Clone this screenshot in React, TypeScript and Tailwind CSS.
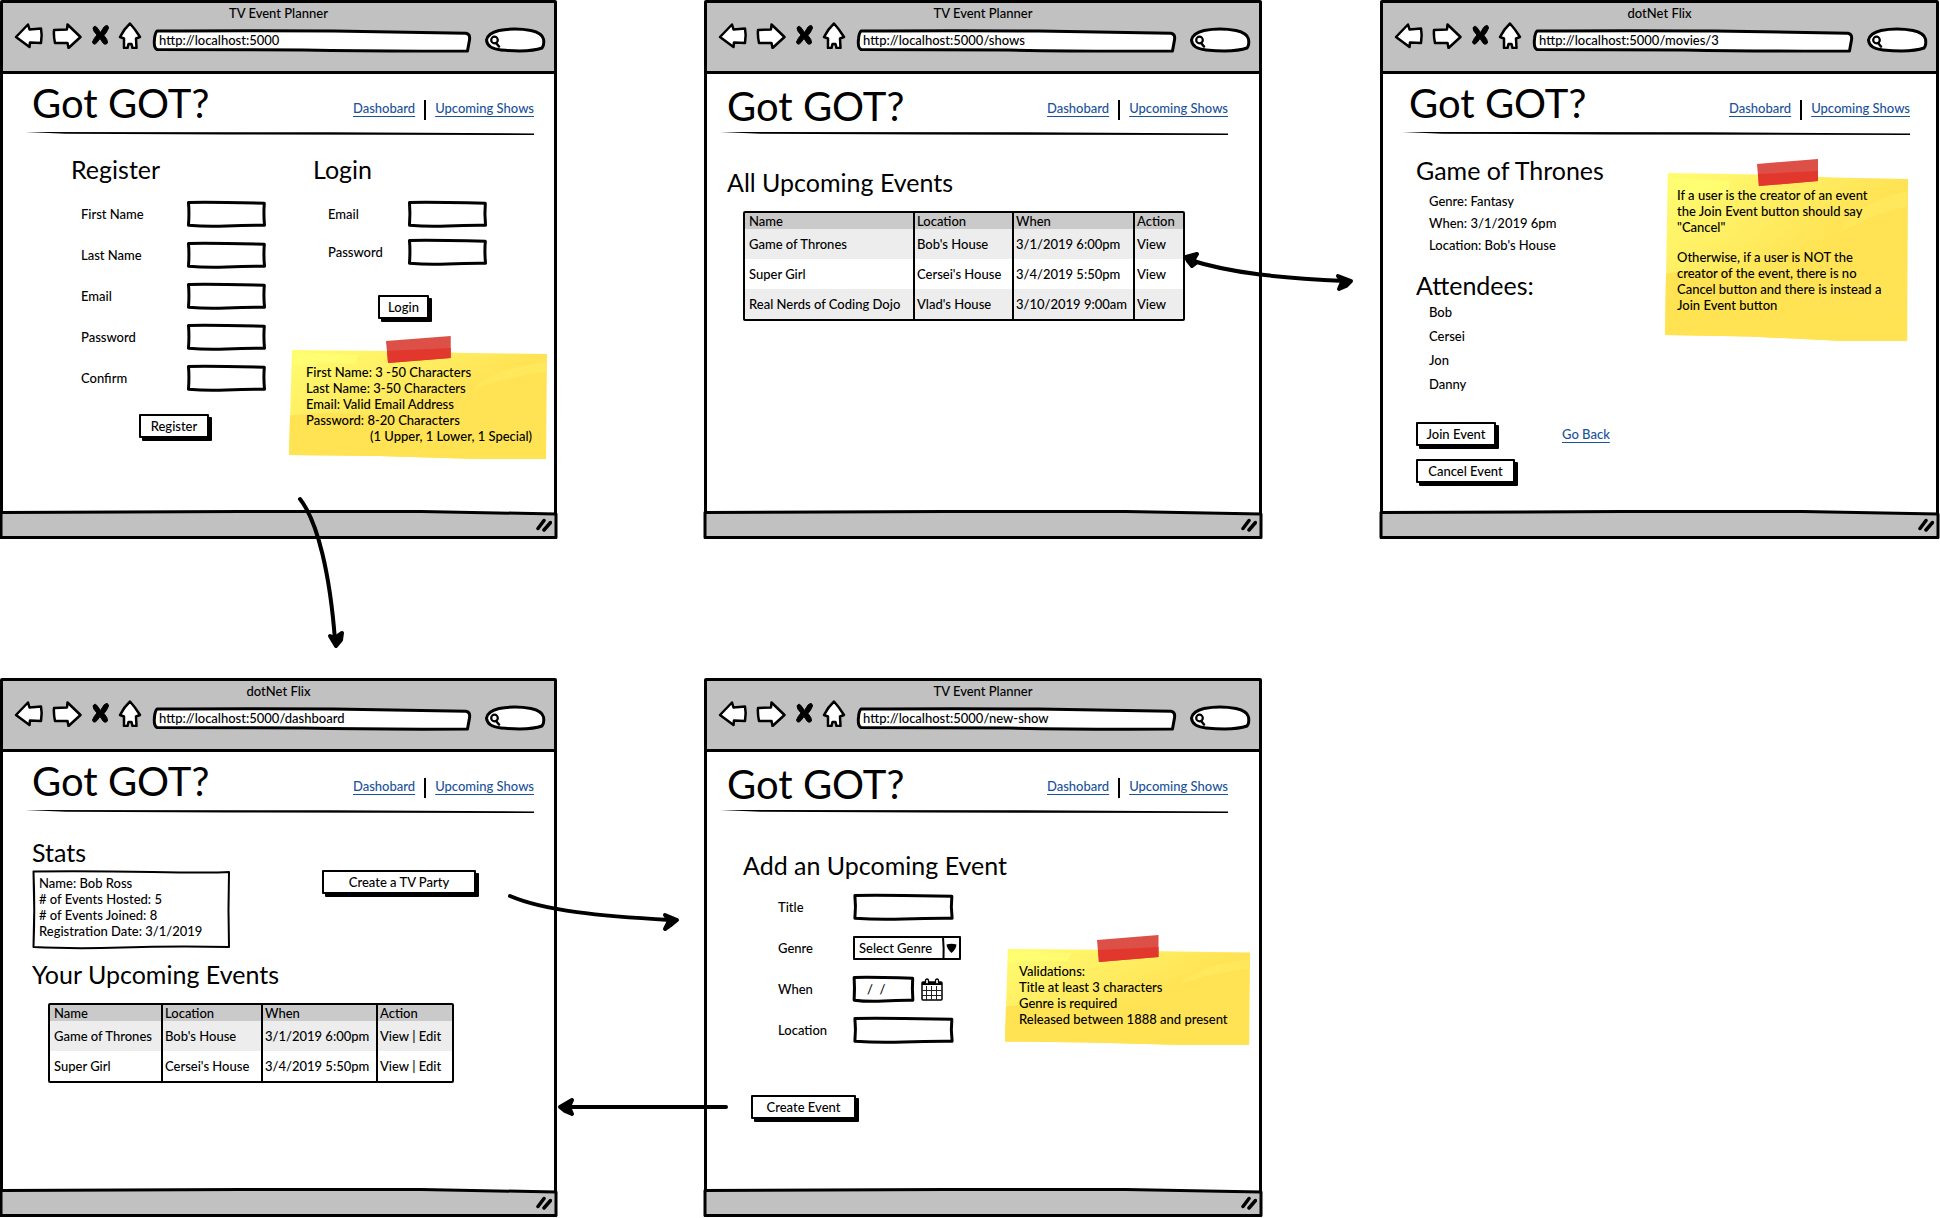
import React from "react";

/* ---------- hand-drawn primitives ---------- */

function Frame({ d, box, fill = "#fff", width = 2 }: { d: string; box: string; fill?: string; width?: number }) {
  return (
    <svg
      aria-hidden="true"
      viewBox={box}
      preserveAspectRatio="none"
      className="pointer-events-none absolute inset-0 h-full w-full overflow-visible"
    >
      <path d={d} fill={fill} stroke="#000" strokeWidth={width} strokeLinejoin="round" vectorEffect="non-scaling-stroke" />
    </svg>
  );
}

function BoxFrame() {
  return (
    <Frame
      box="0 0 80 26"
      width={3}
      d="M1.5 1.5 Q20 1.2 40 1.6 T78.3 2.2 Q77.4 13 78.5 24.2 Q60 24 40 25 T1.5 24.2 Q2.4 12 1.5 1.5Z"
    />
  );
}

function PanelFrame() {
  return (
    <Frame
      box="0 0 198 78"
      width={2}
      d="M1.5 1.5 Q60 1 120 2 T197 2 Q196 40 197 77 Q140 76 90 77.500 T1.500 77 Q3 40 1.500 1.500Z"
    />
  );
}

function Field({ id, label, type = "text" }: { id: string; label: string; type?: string }) {
  return (
    <>
      <label htmlFor={id}>{label}</label>
      <div className="relative h-[26px]">
        <BoxFrame />
        <input id={id} type={type} className="relative h-full w-full bg-transparent px-2 outline-none" />
      </div>
    </>
  );
}

function SketchButton({ children, className = "" }: { children: React.ReactNode; className?: string }) {
  return (
    <button
      type="button"
      className={`h-6 rounded-[1px] border-2 border-black bg-white px-2 leading-4 shadow-[3px_3px_0_#000] ${className}`}
    >
      {children}
    </button>
  );
}

function Link({ children }: { children: React.ReactNode }) {
  return (
    <a href="#" className="text-[#1b5299] underline decoration-1 underline-offset-[3px]">
      {children}
    </a>
  );
}

function Heading({ children, className = "" }: { children: React.ReactNode; className?: string }) {
  return <h2 className={`text-[25px] leading-[30px] font-normal whitespace-nowrap ${className}`}>{children}</h2>;
}

function StickyNote({ children, className = "" }: { children: React.ReactNode; className?: string }) {
  const id = React.useId();
  return (
    <aside className={`relative whitespace-nowrap ${className}`}>
      <svg
        aria-hidden="true"
        viewBox="0 0 260 110"
        preserveAspectRatio="none"
        className="pointer-events-none absolute inset-0 h-full w-full"
      >
        <defs>
          <linearGradient id={id} x1="0" y1="0" x2="0.6" y2="0.5">
            <stop offset="0" stopColor="#fffd70" />
            <stop offset="0.45" stopColor="#fff166" />
            <stop offset="1" stopColor="#ffe354" />
          </linearGradient>
        </defs>
        <path d="M3 0 L100 1 L180 3 L259 4 L258 110 L190 110 L90 107 L0 106 Z" fill={`url(#${id})`} />
        <path d="M1 66 Q60 60 105 70 Q150 100 258 92 L258 110 L190 110 L90 107 L0 106 Z" fill="#ffe352" />
        <path d="M5 3 L70 5 L66 14 Q40 12 4 16Z" fill="#ffff74" opacity="0.7" />
        <path d="M185 40 Q200 20 258 12 L258 22 Q215 28 185 40Z" fill="#ffee62" opacity="0.5" />
      </svg>
      <svg
        aria-hidden="true"
        viewBox="0 0 64 27"
        preserveAspectRatio="none"
        className="pointer-events-none absolute -top-3.5 left-[37.5%] h-[27px] w-1/4"
      >
        <path d="M0 5 L64 0 L64 22 L2 27 Z" fill="#dc5048" />
        <path d="M1 15 L64 12 L64 22 L2 27 Z" fill="#e2372c" />
      </svg>
      <div className="relative">{children}</div>
    </aside>
  );
}

/* ---------- browser chrome ---------- */

function ToolIcon({ d, className, label }: { d: string; className: string; label: string }) {
  return (
    <button type="button" aria-label={label} className={`shrink-0 ${className}`}>
      <svg viewBox={`0 0 ${label === "Home" ? 24 : 30} 28`} className="h-7 w-full">
        <path d={d} fill="#fff" stroke="#000" strokeWidth="2.5" strokeLinejoin="round" />
      </svg>
    </button>
  );
}

type BrowserProps = {
  id: string;
  title: string;
  url: string;
  className: string;
  navClass: string;
  titleClass?: string;
  children: React.ReactNode;
};

function Browser({ id, title, url, className, navClass, titleClass = "pt-px", children }: BrowserProps) {
  return (
    <section className={`flex flex-col rounded-[2px] border-[3px] border-black bg-white ${className}`}>
      <header className="border-b-[3px] border-black bg-[#c1c1c1] pt-0.5 pb-[19px]">
        <div className="text-center">{title}</div>
        <div className="flex items-start gap-2 pr-[9px] pl-[11px]">
          <ToolIcon
            label="Back"
            className="w-[30px]"
            d="M2 16 L14 3.5 L15.5 8.5 L27 7.5 Q28.4 14 27 22 L16 21.5 L15.5 26 Z"
          />
          <ToolIcon
            label="Forward"
            className="w-[30px]"
            d="M2 9 L15 8.5 L15.5 3.5 L28.5 16 L16.5 27 L15.5 22 L3 22 Q1.5 15 2 9Z"
          />
          <button type="button" aria-label="Stop" className="w-5 shrink-0">
            <svg viewBox="0 0 20 28" className="h-7 w-full">
              <path
                d="M3 7 Q5 3 8 8 L10.5 11.5 L14 6 Q18 2.500 18.500 7 Q17 11 14 14.500 Q18 19 17.500 22 Q14.500 25 12 20.500 L10 17.500 L7 21.500 Q3.500 25 2.500 21 Q4 17 7 14 Q3 10 3 7Z"
                fill="#000"
                stroke="#000"
                strokeWidth="1"
              />
            </svg>
          </button>
          <ToolIcon
            label="Home"
            className="w-6"
            d="M12 2.500 Q17 8 22 16 L18 17.500 L18.500 27 L14.500 27 L13.500 23 L10.500 23 L9.500 27 L6 27 L6 17.500 L2 16 Q6 8 12 2.500Z"
          />
          <div className="relative mt-[9px] ml-[3px] h-[22px] min-w-0 flex-1">
            <Frame
              box="0 0 317 22"
              width={3}
              d="M4 1 Q100 0.5 180 1 L312 3.2 Q316.500 4 315.500 10 L313.500 21 Q220 21.500 150 20 L4 19.500 Q0.500 18 1.500 9 Q2 3 4 1Z"
            />
            <input
              aria-label="Address"
              defaultValue={url}
              className="relative h-5 w-full bg-transparent px-1.5 leading-5 outline-none"
            />
          </div>
          <div className="relative mt-[7px] ml-1.5 h-6 w-[60px] shrink-0">
            <Frame
              box="0 0 60 24"
              width={3}
              d="M14 2.500 Q30 -0.500 46 2.500 Q57 5 58.500 11 Q59.500 17 57 20 Q45 24.500 16 22 Q2 20.500 1.500 12 Q3 5 14 2.500Z"
            />
            <svg aria-hidden="true" viewBox="0 0 12 13" className="absolute top-[7px] left-1 h-[13px] w-3">
              <circle cx="5.500" cy="5" r="3.300" fill="none" stroke="#000" strokeWidth="2.200" />
              <path d="M7 8 L10 11.500" stroke="#000" strokeWidth="2.500" strokeLinecap="round" />
            </svg>
            <input aria-label="Search" className="relative h-full w-full bg-transparent pr-2 pl-4 outline-none" />
          </div>
        </div>
      </header>

      <main className="flex-1">
        <div className={navClass}>
          <div className="flex min-h-[58px] items-start justify-between pt-2 pl-[7px]">
            <h1 className={`text-[40px] leading-[40px] font-normal whitespace-nowrap ${titleClass}`}>Got GOT?</h1>
            <nav aria-label={`${id} navigation`} className="flex gap-[9px] pt-[18px]">
              <Link>Dashobard</Link>
              <span className="h-5 w-0.5 bg-black" />
              <Link>Upcoming Shows</Link>
            </nav>
          </div>
          <hr className="h-[3px] border-0 bg-black [clip-path:polygon(0_0,60%_10%,100%_50%,100%_100%,40%_85%,8%_55%)]" />
        </div>
        {children}
      </main>

      <footer className="relative -mx-[2px] -mb-[2px] h-7">
        <Frame box="0 0 555 28" width={3} fill="#c1c1c1" d="M0 2.500 Q150 1.500 240 1.500 T420 1.500 L555 4 L555 27.500 L0 27.500Z" />
        <svg aria-hidden="true" viewBox="0 0 16 14" className="absolute right-1 bottom-1.5 h-3.5 w-4">
          <path d="M2 10.500 L8 2.500 M8 12 L14.500 4.500" stroke="#000" strokeWidth="3.500" strokeLinecap="round" />
        </svg>
      </footer>
    </section>
  );
}

/* ---------- event table ---------- */

const HEADS = ["Name", "Location", "When", "Action"];

function EventTable({
  rows,
  widths,
  actions,
  className,
}: {
  rows: string[][];
  widths: string[];
  actions: string[];
  className: string;
}) {
  const pad = (i: number) => (i === 0 ? "pl-1" : "border-l-2 border-black pl-0.5");
  return (
    <table className={`border-separate border-spacing-0 rounded-[2px] border-2 border-black text-left whitespace-nowrap ${className}`}>
      <thead className="bg-[#cacaca]">
        <tr>
          {HEADS.map((h, i) => (
            <th key={h} scope="col" className={`font-medium ${widths[i]} ${pad(i)}`}>
              {h}
            </th>
          ))}
        </tr>
      </thead>
      <tbody>
        {rows.map((r) => (
          <tr key={r[0]} className="odd:bg-[#ededed]">
            {r.map((c, i) => (
              <td key={c} className={`py-[7px] ${pad(i)}`}>
                {c}
              </td>
            ))}
            <td className={`py-[7px] ${pad(3)}`}>
              {actions.map((a, i) => (
                <React.Fragment key={a}>
                  {i > 0 && " | "}
                  <a href="#">{a}</a>
                </React.Fragment>
              ))}
            </td>
          </tr>
        ))}
      </tbody>
    </table>
  );
}

const THRONES = ["Game of Thrones", "Bob's House", "3/1/2019 6:00pm"];
const SUPERGIRL = ["Super Girl", "Cersei's House", "3/4/2019 5:50pm"];
const NERDS = ["Real Nerds of Coding Dojo", "Vlad's House", "3/10/2019 9:00am"];

/* ---------- screens ---------- */

function AuthScreen() {
  return (
    <Browser
      id="Welcome"
      title="TV Event Planner"
      url="http://localhost:5000"
      className="col-start-1"
      navClass="ml-[22px] mr-5"
    >
      <div className="grid grid-cols-[218px_1fr] pt-[19px] pb-[51px] pl-[68px]">
        <form>
          <Heading>Register</Heading>
          <div className="mt-[17px] grid grid-cols-[106px_79px] items-center gap-y-[15px] pl-2.5">
            <Field id="first" label="First Name" />
            <Field id="last" label="Last Name" />
            <Field id="reg-email" label="Email" />
            <Field id="reg-pass" label="Password" type="password" />
            <Field id="confirm" label="Confirm" type="password" />
          </div>
          <SketchButton className="mt-[23px] ml-[68px] w-[70px]">Register</SketchButton>
        </form>
        <div>
          <form className="pl-6">
            <Heading>Login</Heading>
            <div className="mt-[17px] grid grid-cols-[80px_79px] items-center gap-y-3 pl-[15px]">
              <Field id="log-email" label="Email" />
              <Field id="log-pass" label="Password" type="password" />
            </div>
            <SketchButton className="mt-[30px] ml-[65px] w-[51px]">Login</SketchButton>
          </form>
          <StickyNote className="mt-[31px] mr-1.5 pt-3.5 pb-[15px] pl-[17px]">
            <p>First Name: 3 -50 Characters</p>
            <p>Last Name: 3-50 Characters</p>
            <p>Email: Valid Email Address</p>
            <p>Password: 8-20 Characters</p>
            <p className="pl-16">(1 Upper, 1 Lower, 1 Special)</p>
          </StickyNote>
        </div>
      </div>
    </Browser>
  );
}

function ShowsScreen() {
  return (
    <Browser
      id="Shows"
      title="TV Event Planner"
      url="http://localhost:5000/shows"
      className="col-start-3"
      navClass="ml-[13px] mr-[31px]"
      titleClass="pt-1"
    >
      <div className="pt-8 pl-5">
        <Heading>All Upcoming Events</Heading>
        <EventTable
          className="mt-3.5 ml-4"
          widths={["w-[168px]", "w-[99px]", "w-[121px]", "w-[50px]"]}
          rows={[THRONES, SUPERGIRL, NERDS]}
          actions={["View"]}
        />
      </div>
    </Browser>
  );
}

function DetailScreen() {
  return (
    <Browser
      id="Event"
      title="dotNet Flix"
      url="http://localhost:5000/movies/3"
      className="col-start-5"
      navClass="ml-[19px] mr-[26px]"
    >
      <div className="grid grid-cols-[249px_1fr] items-start pt-5 pr-[27px] pb-6 pl-[33px]">
        <div>
          <Heading>Game of Thrones</Heading>
          <div className="mt-[5px] pl-[13px] leading-[22px]">
            <p>Genre: Fantasy</p>
            <p>When: 3/1/2019 6pm</p>
            <p>Location: Bob's House</p>
          </div>
          <Heading className="mt-3.5">Attendees:</Heading>
          <ul className="pl-[13px] leading-6">
            <li>Bob</li>
            <li>Cersei</li>
            <li>Jon</li>
            <li>Danny</li>
          </ul>
          <div className="mt-[26px] flex items-center">
            <SketchButton className="w-20">Join Event</SketchButton>
            <span className="ml-[66px]">
              <Link>Go Back</Link>
            </span>
          </div>
          <SketchButton className="mt-[13px] w-[99px]">Cancel Event</SketchButton>
        </div>
        <StickyNote className="mt-[18px] pt-3.5 pb-7 pl-3">
          <p>
            If a user is the creator of an event
            <br />
            the Join Event button should say
            <br />
            "Cancel"
          </p>
          <p className="mt-3.5">
            Otherwise, if a user is NOT the
            <br />
            creator of the event, there is no
            <br />
            Cancel button and there is instead a
            <br />
            Join Event button
          </p>
        </StickyNote>
      </div>
    </Browser>
  );
}

function DashboardScreen() {
  return (
    <Browser
      id="Dashboard"
      title="dotNet Flix"
      url="http://localhost:5000/dashboard"
      className="col-start-1"
      navClass="ml-[22px] mr-5"
    >
      <div className="pt-6 pl-[29px]">
        <Heading>Stats</Heading>
        <div className="mt-[3px] flex items-start">
          <div className="relative w-[198px] pt-[5px] pb-[9px] pl-[7px]">
            <PanelFrame />
            <div className="relative">
              <p>Name: Bob Ross</p>
              <p># of Events Hosted: 5</p>
              <p># of Events Joined: 8</p>
              <p>Registration Date: 3/1/2019</p>
            </div>
          </div>
          <SketchButton className="ml-[92px] w-[154px]">Create a TV Party</SketchButton>
        </div>
        <Heading className="mt-[11px]">Your Upcoming Events</Heading>
        <EventTable
          className="mt-3.5 ml-4"
          widths={["w-[111px]", "w-[100px]", "w-[115px]", "w-[76px]"]}
          rows={[THRONES, SUPERGIRL]}
          actions={["View", "Edit"]}
        />
      </div>
    </Browser>
  );
}

function CalendarIcon() {
  return (
    <svg aria-hidden="true" viewBox="0 0 22 23" className="h-[23px] w-[22px]">
      <rect x="1" y="4" width="20" height="18" rx="1" fill="#fff" stroke="#000" strokeWidth="1.500" />
      <path d="M1 4h20v3H1z" fill="#000" />
      <path d="M5.500 8v14M10.500 8v14M15.500 8v14M1 12.500h20M1 17.500h20" stroke="#222" strokeWidth="1" />
      <rect x="4.500" y="1" width="3" height="5" rx="1.500" fill="#fff" stroke="#000" strokeWidth="1.300" />
      <rect x="14.500" y="1" width="3" height="5" rx="1.500" fill="#fff" stroke="#000" strokeWidth="1.300" />
    </svg>
  );
}

function NewShowScreen() {
  return (
    <Browser
      id="New show"
      title="TV Event Planner"
      url="http://localhost:5000/new-show"
      className="col-start-3"
      navClass="ml-[13px] mr-[31px]"
      titleClass="pt-1"
    >
      <div className="grid grid-cols-[262px_1fr] items-start pt-[37px] pr-2 pb-[69px] pl-9">
        <form>
          <Heading>Add an Upcoming Event</Heading>
          <div className="mt-3.5 grid grid-cols-[75px_101px] items-center gap-y-[15px] pl-[35px]">
            <Field id="title" label="Title" />
            <label htmlFor="genre">Genre</label>
            <div className="relative h-[26px] w-[108px] py-px">
              <select
                id="genre"
                className="h-6 w-full appearance-none rounded-[1px] border-2 border-black bg-white pl-1 leading-5 outline-none"
              >
                <option>Select Genre</option>
              </select>
              <svg aria-hidden="true" viewBox="0 0 20 24" className="pointer-events-none absolute top-px right-0 h-6 w-5">
                <path d="M2 1 Q3 12 2.500 23" fill="none" stroke="#000" strokeWidth="2" />
                <path d="M5.500 8.500 Q10.500 7 15.500 8.500 Q15 13.500 10.500 17 Q6 13 5.500 8.500Z" fill="#000" />
              </svg>
            </div>
            <label htmlFor="when">When</label>
            <div className="flex items-center gap-[7px]">
              <div className="relative h-[26px] w-[61px] shrink-0">
                <BoxFrame />
                <input
                  id="when"
                  defaultValue="/  /"
                  className="relative h-full w-full bg-transparent pl-3.5 whitespace-pre outline-none"
                />
              </div>
              <button type="button" aria-label="Pick a date" className="shrink-0">
                <CalendarIcon />
              </button>
            </div>
            <Field id="location" label="Location" />
          </div>
          <SketchButton className="mt-[52px] ml-2 w-[105px]">Create Event</SketchButton>
        </form>
        <StickyNote className="mt-[99px] pt-3.5 pb-[18px] pl-3.5">
          <p>Validations:</p>
          <p>Title at least 3 characters</p>
          <p>Genre is required</p>
          <p>Released between 1888 and present</p>
        </StickyNote>
      </div>
    </Browser>
  );
}

/* ---------- arrows between screens ---------- */

function FlowArrows() {
  return (
    <svg
      aria-hidden="true"
      viewBox="0 0 1940 1217"
      preserveAspectRatio="none"
      className="pointer-events-none absolute inset-0 h-full w-full"
    >
      <g fill="none" stroke="#000" strokeWidth="4" strokeLinecap="round">
        <path d="M300 499 C318 522 330 575 335 640" />
        <path d="M1190 260 C1230 273 1280 278 1345 281" />
        <path d="M510 896 C545 911 600 916 670 920" />
        <path d="M565 1107 H726" />
      </g>
      <g fill="#000" stroke="#000" strokeWidth="4" strokeLinejoin="round">
        <path d="M330 636 L335 638 L342 633 L341 640 L336 646 Z" />
        <path d="M1186 257 L1197 254 L1194 259 L1196 263 L1192 266 L1188 261 Z" />
        <path d="M1351 281 L1338 276 L1342 282 L1339 289 L1346 286 Z" />
        <path d="M677 920 L665 915 L669 921 L665 929 L672 924 Z" />
        <path d="M560 1107 L572 1100 L569 1107 L572 1114 L565 1111 Z" />
      </g>
    </svg>
  );
}

export default function App() {
  return (
    <div className="relative grid min-w-[1800px] grid-cols-[557fr_147fr_558fr_118fr_559fr] gap-y-[139px] bg-white pr-px font-[Lato,sans-serif] text-[13px] leading-4 font-medium text-black">
      <AuthScreen />
      <ShowsScreen />
      <DetailScreen />
      <DashboardScreen />
      <NewShowScreen />
      <FlowArrows />
    </div>
  );
}
